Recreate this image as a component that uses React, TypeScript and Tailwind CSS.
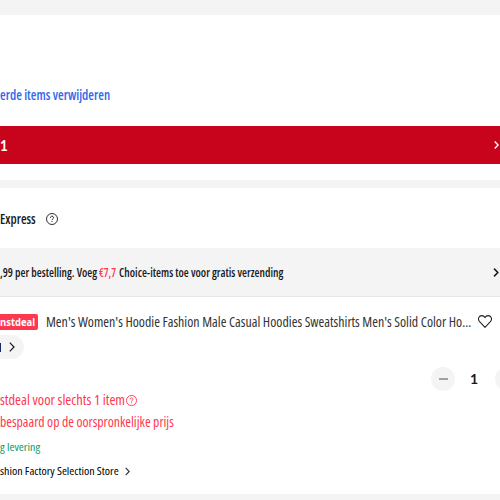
import { useLayoutEffect, useRef, useState, type ReactNode } from "react";

/** Condensed text run, fitted to the given width. */
function Fit({ width, className = "", children }: { width: number; className?: string; children: ReactNode }) {
  const ref = useRef<HTMLSpanElement>(null);
  const [scale, setScale] = useState(1);
  useLayoutEffect(() => {
    if (ref.current) setScale(width / ref.current.offsetWidth);
  }, [width]);
  return (
    <span className={`block shrink-0 whitespace-nowrap ${className}`} style={{ width }}>
      <span ref={ref} className="inline-block origin-left" style={{ transform: `scaleX(${scale})` }}>
        {children}
      </span>
    </span>
  );
}

function Chevron({ className }: { className: string }) {
  return (
    <svg viewBox="0 0 6 10" className={`shrink-0 ${className}`} fill="none" stroke="currentColor">
      <path d="M0.8 0.7 5 5 0.8 9.3" />
    </svg>
  );
}

function Help({ className }: { className: string }) {
  return (
    <svg viewBox="0 0 12 12" className={`shrink-0 ${className}`} fill="none" stroke="currentColor">
      <circle cx="6" cy="6" r="5.5" />
      <path d="M4.4 4.8C4.4 2.6 7.6 2.7 7.6 4.7 7.6 5.8 6 5.8 6 7.1M6 8.1v1" />
    </svg>
  );
}

export default function App() {
  return (
    <div className="flex h-[500px] w-[500px] flex-col overflow-hidden bg-white font-['Open_Sans','Noto_Sans',sans-serif] text-[#191919] [font-stretch:75%]">
      <div className="h-[15px] shrink-0 bg-[#f4f4f4]" />
      <div className="h-[111px] shrink-0 pt-[70px]">
        <Fit width={110} className="text-[13.5px] leading-[20px] font-semibold text-[#3267ec]">erde items verwijderen</Fit>
      </div>
      <div className="flex h-[38px] shrink-0 items-center justify-between bg-[#c8041c] text-white">
        <Fit width={8} className="font-[Lato] text-[15px] leading-5 font-bold">1</Fit>
        <Chevron className="mr-[1px] h-[8px] w-[5px] stroke-[1.8]" />
      </div>
      <div className="h-4 shrink-0" />
      <div className="h-2 shrink-0 bg-[#f4f4f4]" />
      <div className="flex h-[60px] shrink-0 items-center pt-[2px]">
        <Fit width={36} className="text-[14px] leading-5 font-semibold">Express</Fit>
        <Help className="ml-[10px] h-3 w-3 stroke-[0.9]" />
      </div>
      <div className="flex h-[49px] shrink-0 items-center border-b border-[#e6e6e6] bg-[#f4f4f4] pt-[2px] text-[12px] leading-5 font-semibold">
        <Fit width={97}>,99 per bestelling. Voeg</Fit>
        <Fit width={17} className="ml-[2px] text-[#fd384f]">€7,7</Fit>
        <Fit width={164} className="ml-[3px]">Choice-items toe voor gratis verzending</Fit>
        <Chevron className="mr-[1px] mb-[2px] ml-auto h-[9px] w-[6px] stroke-[1.7]" />
      </div>

      <div className="flex h-[197px] shrink-0 flex-col">
        <div className="flex h-[38px] items-center pt-[12px]">
          <div className="flex h-4 w-[38px] shrink-0 items-center rounded-r-[2px] bg-[#fd384f]">
            <Fit width={35} className="text-[10px] leading-4 font-bold text-white [font-stretch:100%]">nstdeal</Fit>
          </div>
          <Fit width={425} className="ml-2 text-[13.5px] leading-5 text-[#333]">
            Men's Women's Hoodie Fashion Male Casual Hoodies Sweatshirts Men's Solid Color Ho...
          </Fit>
          <svg viewBox="0 0 14 13" className="mb-[2px] ml-[7px] h-[13px] w-[14px] shrink-0" fill="none" stroke="#222" strokeWidth="1.1">
            <path d="M7 12.3 1.6 6.7C-.8 3.9 1.1.6 3.9.6 5.5.6 6.5 1.5 7 2.4 7.5 1.5 8.5.6 10.1.6c2.8 0 4.7 3.3 2.3 6.1Z" />
          </svg>
        </div>
        <div className="flex h-6 w-6 items-center rounded-r-full bg-[#f4f4f4]">
          <div className="h-[9px] w-[1px] bg-[#1c2765]" />
          <Chevron className="ml-[8px] h-[10px] w-[6px] stroke-[1.2]" />
        </div>
        <div className="flex h-8 items-end justify-end overflow-hidden">
          <div className="flex h-6 w-6 shrink-0 items-center justify-center rounded-full bg-[#f4f4f4]">
            <div className="h-[2px] w-[9px] bg-[#a0a0a0]" />
          </div>
          <Fit width={8} className="ml-[15px] font-[Lato] text-[14px] leading-6 font-bold">1</Fit>
          <div className="ml-[17px] w-[5px] overflow-hidden">
            <div className="h-6 w-6 rounded-full bg-[#f4f4f4]" />
          </div>
        </div>
        <div className="-mt-[1px] flex h-5 items-center text-[13.5px] leading-5 text-[#fd384f]">
          <Fit width={125}>stdeal voor slechts 1 item</Fit>
          <Help className="ml-[1px] h-[11px] w-[11px] stroke-1" />
        </div>
        <Fit width={174} className="mt-[2px] text-[13.5px] leading-5 text-[#fd384f]">bespaard op de oorspronkelijke prijs</Fit>
        <Fit width={40} className="mt-[5px] text-[11.5px] leading-5 text-[#099e62]">g levering</Fit>
        <div className="mt-1 flex h-5 items-center">
          <Fit width={119} className="text-[11.5px] leading-5 font-medium text-black">shion Factory Selection Store</Fit>
          <Chevron className="ml-[6px] h-[9px] w-[5px] stroke-[1.4] text-[#333]" />
        </div>
      </div>
      <div className="h-[6px] shrink-0 bg-[#f4f4f4]" />
    </div>
  );
}
